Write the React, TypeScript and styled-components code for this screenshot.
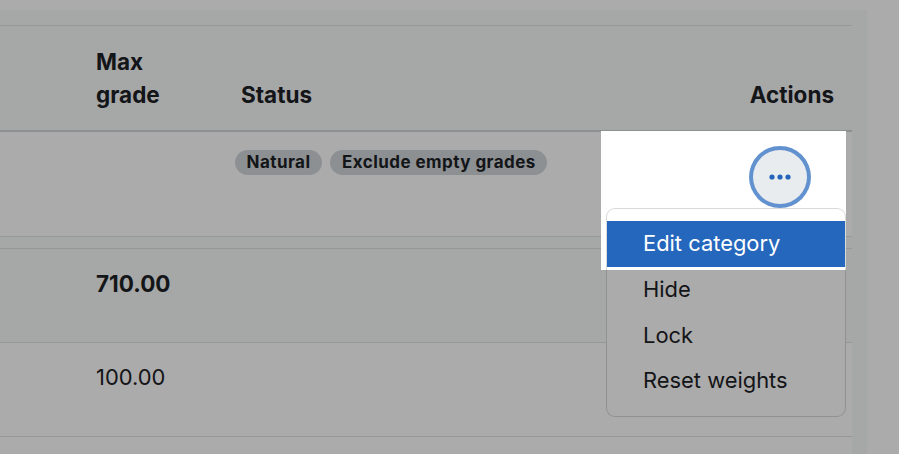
import styled, { createGlobalStyle } from "styled-components";

const GlobalStyle = createGlobalStyle`
  html, body {
    margin: 0;
    padding: 0;
    overflow: hidden;
    background: #ffffff;
  }
  body {
    font-family: Inter, "Liberation Sans", sans-serif;
    font-size: 22.5px;
    line-height: 33.75px;
    color: #1d2125;
  }
`;

const statusBadges = ["Natural", "Exclude empty grades"];
const menuItems = ["Edit category", "Hide", "Lock", "Reset weights"];

const App = () => {
    return (
        <>
            <GlobalStyle />
            <Page>
                <Region>
                    <Table>
                        <Row $h={107} $head>
                            <HeadCell />
                            <HeadCell>Max<br />grade</HeadCell>
                            <HeadCell>Status</HeadCell>
                            <HeadCell $right>Actions</HeadCell>
                        </Row>
                        <Row $h={105} $bg="#ffffff">
                            <Cell />
                            <Cell />
                            <Cell>
                                <Badges>
                                    {statusBadges.map((b) => <Badge key={b}>{b}</Badge>)}
                                </Badges>
                            </Cell>
                            <ActionCell>
                                <MoreButton aria-label="Actions">
                                    <svg width="22" height="6" viewBox="0 0 22 6">
                                        <circle cx="3" cy="3" r="2.6" fill="currentColor" />
                                        <circle cx="11" cy="3" r="2.6" fill="currentColor" />
                                        <circle cx="19" cy="3" r="2.6" fill="currentColor" />
                                    </svg>
                                </MoreButton>
                                <Menu>
                                    {menuItems.map((item, i) => (
                                        <MenuItem key={item} $active={i === 0}>{item}</MenuItem>
                                    ))}
                                </Menu>
                            </ActionCell>
                        </Row>
                        <Row $h={12} />
                        <Row $h={94}>
                            <Cell />
                            <Cell $bold>710.00</Cell>
                            <Cell />
                            <Cell />
                        </Row>
                        <Row $h={94} $bg="#ffffff">
                            <Cell />
                            <Cell>100.00</Cell>
                            <Cell />
                            <Cell />
                        </Row>
                        <Row $h={60} $bg="#ffffff" />
                    </Table>
                </Region>
                <Spotlight />
                <Dim />
            </Page>
        </>
    );
};

// layout
const Page = styled.div`
    position: relative;
    width: 899px;
    height: 454px;
    padding-top: 10px;
    box-sizing: border-box;
    overflow: hidden;
`;

const Region = styled.div`
    width: 867px;
    height: 100%;
    background: #f8f9fa;
    padding: 15px 15px 0 0;
    box-sizing: border-box;
`;

const Table = styled.div`
    display: flex;
    flex-direction: column;
`;

const Row = styled.div<{ $h: number; $bg?: string; $head?: boolean }>`
    display: grid;
    grid-template-columns: 78px 145px 1fr 252px;
    height: ${(p) => p.$h}px;
    flex-shrink: 0;
    box-sizing: border-box;
    background: ${(p) => p.$bg ?? "transparent"};
    border-top: ${(p) => (p.$head ? "1px solid #dee2e6" : "none")};
    border-bottom: ${(p) => (p.$head ? "2px solid #d3d7db" : "1px solid #dee2e6")};
`;

const HeadCell = styled.div<{ $right?: boolean }>`
    align-self: end;
    padding: 18px;
    font-weight: 700;
    text-align: ${(p) => (p.$right ? "right" : "left")};
`;

const Cell = styled.div<{ $bold?: boolean }>`
    padding: 18px;
    font-size: ${(p) => (p.$bold ? "22.5px" : "21.9px")};
    font-weight: ${(p) => (p.$bold ? 700 : 400)};
`;

const Badges = styled.div`
    display: flex;
    gap: 8.5px;
    margin-left: -6px;
`;

const Badge = styled.span`
    display: inline-block;
    padding: 4px 11.5px;
    font-size: 17px;
    line-height: 17px;
    letter-spacing: 0.45px;
    font-weight: 700;
    background: #d3d7dc;
    color: #1d2125;
    border-radius: 20px;
    white-space: nowrap;
`;

// action menu
const ActionCell = styled.div`
    position: relative;
    display: flex;
    justify-content: flex-end;
    align-items: flex-start;
    padding: 18px 45px 0 0;
`;

const MoreButton = styled.button`
    position: relative;
    z-index: 20;
    width: 54px;
    height: 54px;
    border: none;
    border-radius: 50%;
    background: #e9ecef;
    color: #2465bb;
    box-shadow: 0 0 0 4px rgba(37, 103, 189, 0.72);
    display: flex;
    align-items: center;
    justify-content: center;
    padding: 0;
    cursor: pointer;
`;

const Menu = styled.div`
    position: absolute;
    z-index: 20;
    top: 76px;
    right: 6px;
    width: 240px;
    box-sizing: border-box;
    padding: 12px 0;
    background: #ffffff;
    border: 1px solid rgba(0, 0, 0, 0.15);
    border-radius: 9px;
`;

const MenuItem = styled.div<{ $active?: boolean }>`
    padding: 6px 36px;
    font-size: 21.9px;
    line-height: 33.75px;
    white-space: nowrap;
    background: ${(p) => (p.$active ? "#2567bd" : "transparent")};
    color: ${(p) => (p.$active ? "#ffffff" : "#1d2125")};
`;

// tour overlay
const Spotlight = styled.div`
    position: absolute;
    z-index: 10;
    left: 601px;
    top: 131px;
    width: 245px;
    height: 139px;
    background: #ffffff;
`;

const Dim = styled.div`
    position: absolute;
    z-index: 30;
    left: 601px;
    top: 131px;
    width: 245px;
    height: 139px;
    pointer-events: none;
    box-shadow: 0 0 0 2000px rgba(0, 0, 0, 0.33);
`;

export default App;
